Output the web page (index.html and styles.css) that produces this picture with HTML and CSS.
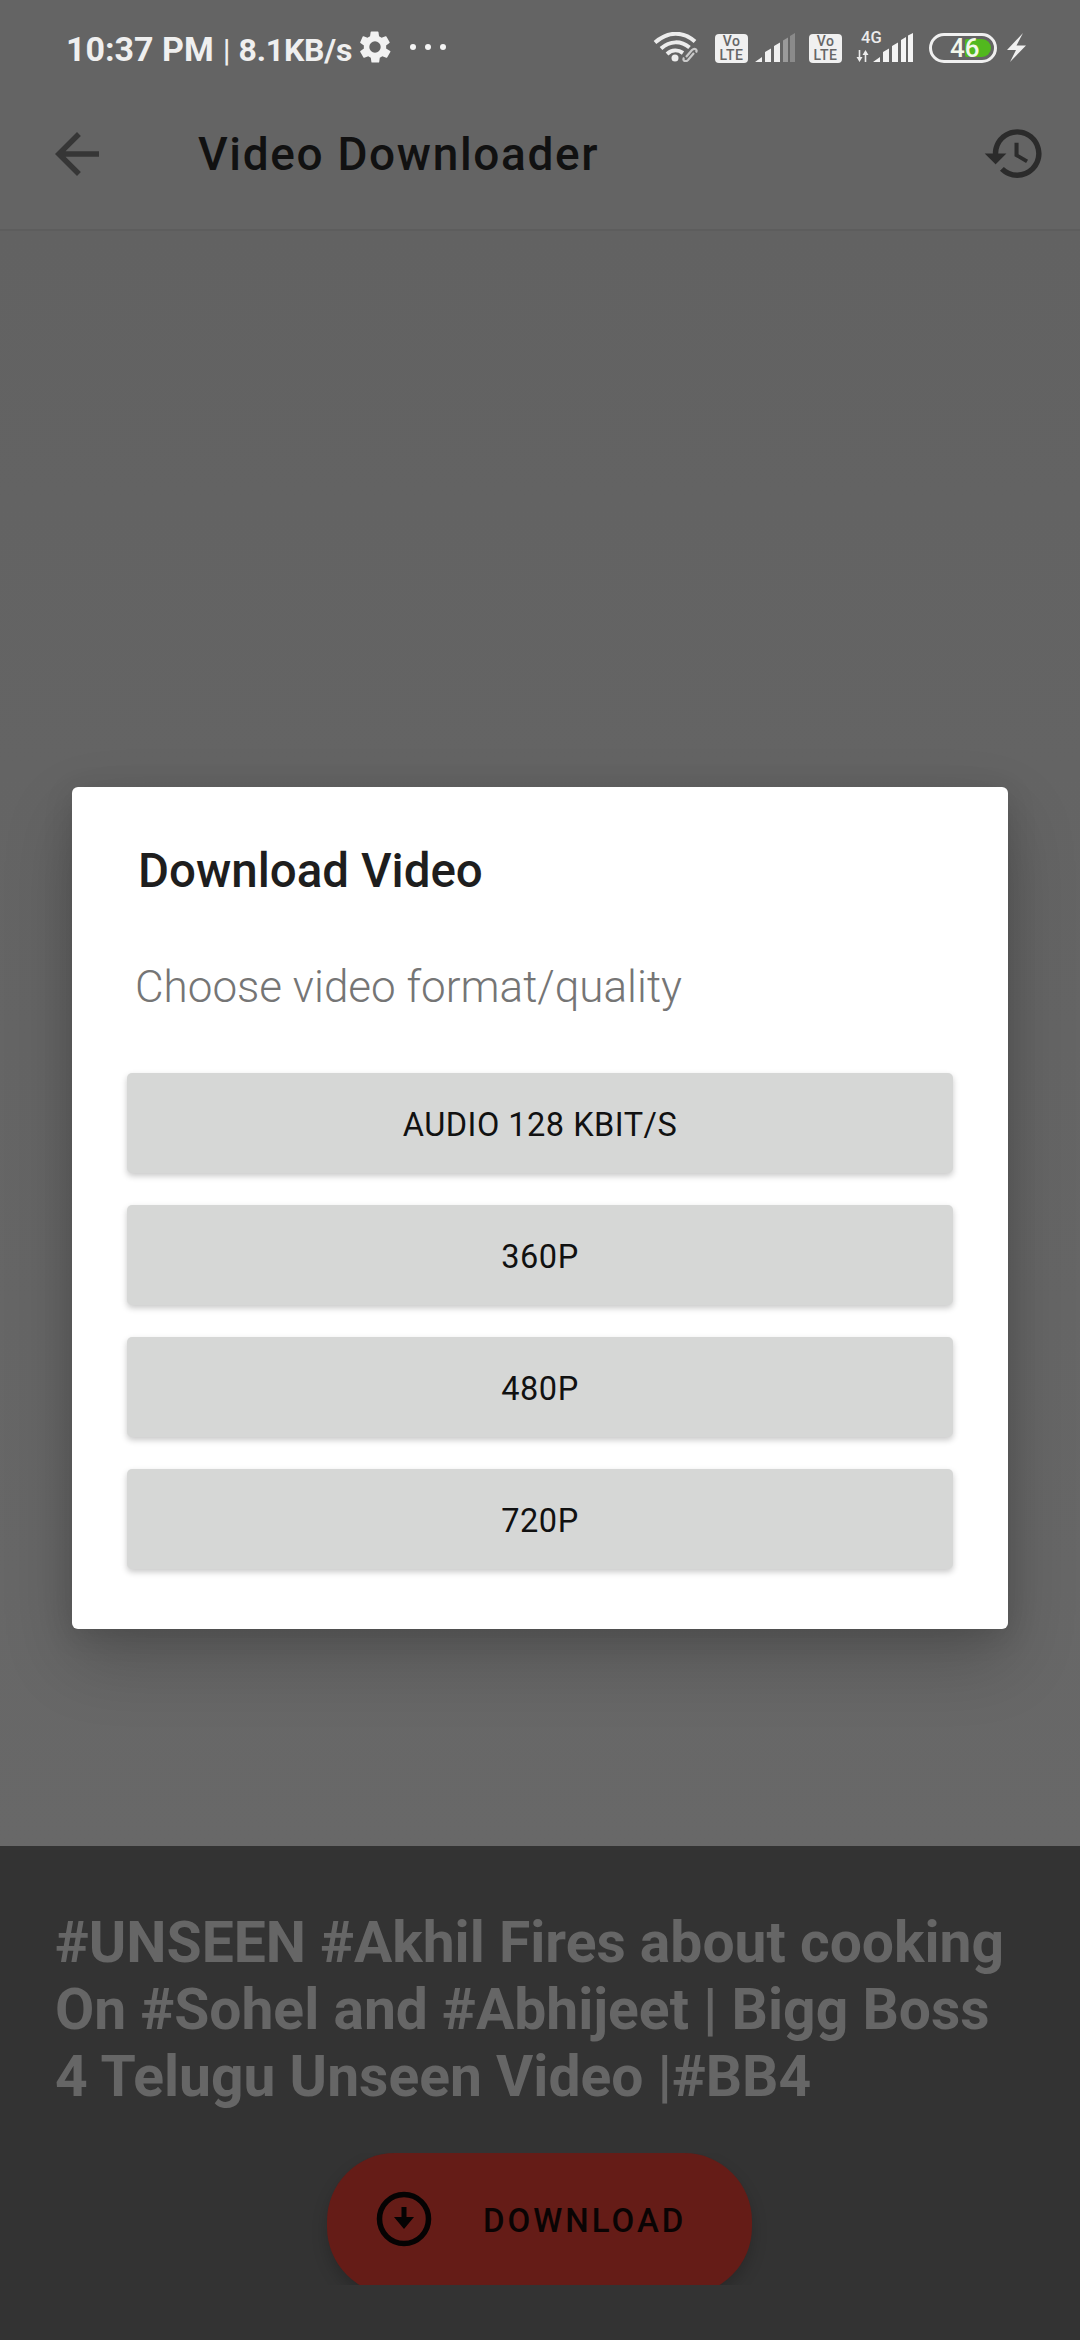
FILE: index.html
```html
<!DOCTYPE html>
<html lang="en">
<head>
  <meta charset="UTF-8" />
  <meta name="viewport" content="width=device-width, initial-scale=1.0" />
  <title>Video Downloader</title>
  <link rel="stylesheet" href="styles.css">
</head>
<body>
  <div class="status">
    <span class="clock">10:37 PM<i class="pipe">|</i><span class="speed">8.1KB/s</span></span>
    <svg class="gear" viewBox="0 0 24 24"><path fill="#f2f2f2" d="M19.4 13a7.6 7.6 0 0 0 0-2l2.2-1.7a.5.5 0 0 0 .1-.7l-2.1-3.6a.5.5 0 0 0-.6-.2l-2.6 1a7.6 7.6 0 0 0-1.7-1l-.4-2.8a.5.5 0 0 0-.5-.4H9.600a.5.5 0 0 0-.5.4l-.4 2.800a8 8 0 0 0-1.700 1l-2.600-1a.5.5 0 0 0-.6.2L2.200 8.600a.5.5 0 0 0 .1.700L4.600 11a7.600 7.600 0 0 0 0 2l-2.300 1.700a.5.5 0 0 0-.1.700l2.100 3.600a.5.5 0 0 0 .6.2l2.600-1a7.600 7.600 0 0 0 1.700 1l.4 2.800a.5.5 0 0 0 .5.4h4.200a.5.5 0 0 0 .5-.4l.4-2.800a8 8 0 0 0 1.700-1l2.600 1a.5.5 0 0 0 .6-.2l2.100-3.600a.5.5 0 0 0-.1-.7zM12 15.800a3.800 3.800 0 1 1 0-7.600 3.800 3.800 0 0 1 0 7.600z"/></svg>
    <div class="dots"><b></b><b></b><b></b></div>
    <div class="status-right">
      <svg class="wifi" viewBox="0 0 50 30" fill="none" stroke="#ececec">
        <path stroke-width="4" d="M2 10.500C15 -1 30 -1 42 9.500"/>
        <path stroke-width="4" d="M8 16.500C17 8.500 28 8.500 36.500 15.500"/>
        <path stroke-width="4" d="M14 22C19 17.500 25 17.500 30 21"/>
        <circle cx="22" cy="26" r="3.500" fill="#ececec" stroke="none"/>
        <path stroke="#c9c9c9" stroke-width="2.200" d="M33 25l6-7c2.500-2.500 6-.5 4 2.500M41 21l-6 7c-2.500 2.500-6 .5-4-2.500"/>
      </svg>
      <span class="volte">Vo<br>LTE</span>
      <svg class="signal sim1" viewBox="0 0 40 30" fill="#f0f0f0">
        <path d="M0 29l7-5v5zM10 29V19l6-3.500V29zM19 29V13l6-3.500V29z"/>
        <path fill="#9a9a9a" d="M28 29V7.500l5-3V29z"/>
        <path fill="#8a8a8a" d="M35 29V3l5-3V29z"/>
      </svg>
      <span class="volte volte2">Vo<br>LTE</span>
      <div class="net">
        <span class="net-label">4G</span>
        <svg class="net-arrows" viewBox="0 0 12 12" fill="#ececec"><path d="M2.200 0h1.600v7H6l-3 5-3-5h2.200zM8.200 12h1.600V5H12L9 0 6 5h2.200z"/></svg>
      </div>
      <svg class="signal sim2" viewBox="0 0 40 30" fill="#f4f4f4">
        <path d="M0 29l7-5v5zM10 29V19l6-3.500V29zM19 29V13l6-3.500V29zM28 29V7l5-3V29zM35 29V2.500l5-2.500V29z"/>
      </svg>
      <div class="battery">
        <span class="battery-fill"></span>
        <span class="battery-num">46</span>
      </div>
      <svg class="bolt" viewBox="0 0 19 29"><path fill="#f0f0f0" d="M16 0L0 17h9L3 29 19 12.500H9.500z"/></svg>
    </div>
  </div>

  <div class="toolbar">
    <svg class="back" viewBox="0 0 24 24"><path fill="#363636" d="M20 11H7.830l5.590-5.590L12 4l-8 8 8 8 1.410-1.410L7.830 13H20v-2z"/></svg>
    <div class="toolbar-title">Video Downloader</div>
    <svg class="history" viewBox="0 0 24 24"><path fill="#2b2b2b" d="M13 3c-4.970 0-9 4.030-9 9H1l3.890 3.890.07.140L9 12H6c0-3.870 3.130-7 7-7s7 3.130 7 7-3.130 7-7 7c-1.930 0-3.680-.79-4.940-2.060l-1.420 1.420C8.270 19.990 10.510 21 13 21c4.970 0 9-4.030 9-9s-4.030-9-9-9zm-1 5v5l4.280 2.540.72-1.210-3.500-2.080V8H12z"/></svg>
  </div>

  <div class="main">
    <div class="dialog">
      <div class="dialog-title">Download Video</div>
      <div class="dialog-sub">Choose video format/quality</div>
      <div class="options">
        <div class="option">AUDIO 128 KBIT/S</div>
        <div class="option">360P</div>
        <div class="option">480P</div>
        <div class="option">720P</div>
      </div>
    </div>
  </div>

  <div class="panel">
    <div class="video-title">#UNSEEN #Akhil Fires about cooking On #Sohel and #Abhijeet | Bigg Boss 4 Telugu Unseen Video |#BB4</div>
    <div class="btn-clip">
      <div class="download">
        <svg class="download-icon" viewBox="0 0 56 56">
          <circle cx="28" cy="28" r="24.500" fill="none" stroke="#050303" stroke-width="5.500"/>
          <path fill="#050303" d="M25.500 16h5v10h7.500L28 38 18 26h7.500z"/>
        </svg>
        <span class="download-label">DOWNLOAD</span>
      </div>
    </div>
  </div>
</body>
</html>
```

FILE: styles.css
```css
* { box-sizing: border-box; }
html, body { margin: 0; padding: 0; }
body {
  width: 1080px;
  height: 2340px;
  overflow: hidden;
  display: flex;
  flex-direction: column;
  background: #646464;
  font-family: Roboto, sans-serif;
}

/* status bar */
.status {
  height: 92px;
  padding: 30px 54px 0 66px;
  display: flex;
  align-items: flex-start;
  color: #efefef;
}
.clock {
  font-size: 34px;
  font-weight: 700;
  line-height: 38px;
  white-space: nowrap;
}
.pipe { font-style: normal; font-weight: 400; font-size: 32px; margin: 0 8px 0 9px; }
.speed { font-size: 32px; letter-spacing: -.2px; }
.gear { width: 36px; height: 36px; margin: -1px 0 0 5px; flex: none; }
.dots { display: flex; gap: 9px; margin: 14px 0 0 17px; }
.dots b { width: 6px; height: 6px; border-radius: 50%; background: #f5f5f5; }
.status-right { margin-left: auto; display: flex; align-items: flex-start; }
.wifi { width: 50px; height: 30px; margin-top: 2px; }
.volte {
  width: 33px;
  height: 29px;
  margin: 4px 0 0 12px;
  padding-top: 1px;
  border-radius: 4px;
  background: #f0f0f0;
  color: #666;
  font-size: 14px;
  font-weight: 500;
  letter-spacing: .5px;
  line-height: 13.500px;
  text-align: center;
}
.volte2 { margin-left: 14px; }
.signal { width: 40px; height: 30px; margin: 3px 0 0 7px; }
.net { width: 17px; margin-left: 14px; position: relative; height: 34px; }
.net-label {
  position: absolute;
  left: 5px;
  top: 1px;
  font-size: 16.500px;
  font-weight: 500;
  color: #ececec;
  line-height: 14px;
}
.net-arrows { position: absolute; left: 0; top: 20px; width: 13px; height: 12px; }
.sim2 { margin-left: 0; }
.battery {
  width: 68px;
  height: 30px;
  margin: 3px 0 0 16px;
  border: 3px solid #f0f0f0;
  border-radius: 15px;
  position: relative;
  overflow: hidden;
}
.battery-fill {
  position: absolute;
  left: 33px;
  top: 3px;
  bottom: 3px;
  right: 3px;
  background: #52b81e;
  border-radius: 2px 10px 10px 2px;
}
.battery-num {
  position: absolute;
  left: 18px;
  top: 0;
  font-size: 26px;
  font-weight: 500;
  line-height: 24px;
  color: #f2f7ea;
}
.bolt { width: 19px; height: 29px; margin: 3px 0 0 10px; }

/* toolbar */
.toolbar {
  height: 139px;
  padding: 29px 33px 0 44px;
  display: flex;
  align-items: flex-start;
  background: #646464;
  border-bottom: 2px solid #5d5d5d;
}
.back { width: 66px; height: 66px; }
.toolbar-title {
  margin: 1px 0 0 88px;
  font-size: 46px;
  font-weight: 500;
  letter-spacing: 1.650px;
  line-height: 64px;
  color: #111;
}
.history { width: 65px; height: 65px; margin-left: auto; }

/* dialog */
.main {
  flex: 1;
  padding: 556px 72px 0;
  background: linear-gradient(#626262, #686868);
}
.dialog {
  height: 842px;
  padding: 56px 55px 0;
  background: #fff;
  border-radius: 6px;
  box-shadow: 0 30px 70px rgba(0, 0, 0, .2), 0 6px 30px rgba(0, 0, 0, .12);
}
.dialog-title {
  margin-left: 11px;
  font-size: 47.500px;
  font-weight: 480;
  line-height: 56px;
  color: #1e1e1e;
}
.dialog-sub {
  margin: 60px 0 0 8px;
  font-size: 44px;
  font-weight: 350;
  line-height: 56px;
  color: #757575;
}
.options {
  margin-top: 58px;
  display: flex;
  flex-direction: column;
  gap: 32px;
}
.option {
  height: 100px;
  padding-top: 3px;
  display: flex;
  align-items: center;
  justify-content: center;
  border-radius: 5px;
  background: #d6d7d6;
  box-shadow: 0 3px 6px rgba(0, 0, 0, .22);
  font-size: 32.500px;
  font-weight: 450;
  letter-spacing: .5px;
  color: #111;
}

/* bottom panel */
.panel {
  height: 494px;
  padding: 63px 55px 0;
  background: #333;
}
.video-title {
  font-size: 57px;
  font-weight: 700;
  line-height: 67px;
  color: #666;
}
.btn-clip {
  width: 465px;
  margin: 43px 0 0 252px;
  padding: 0 20px;
  height: 132px;
  overflow: hidden;
}
.download {
  width: 425px;
  height: 142px;
  display: flex;
  align-items: flex-start;
  padding: 34px 0 0 49px;
  gap: 51px;
  border-radius: 68px;
  background: #651c17;
  box-shadow: 0 8px 16px rgba(0, 0, 0, .2);
  font-size: 33px;
  font-weight: 500;
  letter-spacing: 3px;
  line-height: 62px;
  color: #0a0404;
}
.download-icon { width: 56px; height: 56px; margin-top: 4px; flex: none; }
.download-label { padding-top: 3px; }
```
